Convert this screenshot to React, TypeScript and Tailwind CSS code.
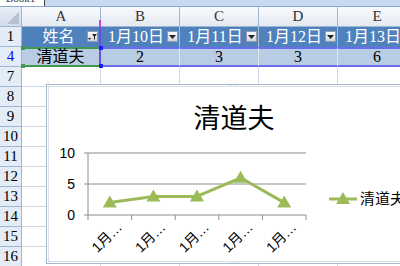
import React from 'react';

const serif = { fontFamily: '"Liberation Serif", "Noto Sans CJK SC", serif' };
const sans = '"Liberation Sans", "Noto Sans CJK SC", sans-serif';

const cols = ['A', 'B', 'C', 'D', 'E'];
const heads = ['1月10日', '1月11日', '1月12日', '1月13日'];
const values = [2, 3, 3, 6];
const emptyRows = [7, 8, 9, 10, 11, 12, 13, 14, 15, 16];

function DropButton() {
  return (
    <span className="absolute right-[1px] top-[4px] flex h-[11px] w-[11px] items-center justify-center border border-[#8f9cb0] bg-gradient-to-b from-[#fafafa] to-[#cfd5de]">
      <svg width="7" height="4" viewBox="0 0 7 4">
        <path d="M0 0h7L3.5 4z" fill="#222" />
      </svg>
    </span>
  );
}

function FilterButton() {
  return (
    <span className="absolute right-[1px] top-[4px] flex h-[11px] w-[11px] items-center justify-center border border-[#8f9cb0] bg-gradient-to-b from-[#fafafa] to-[#cfd5de]">
      <svg width="9" height="8" viewBox="0 0 9 8">
        <path d="M4 1h5L7 3.5V7L6 6V3.5z" fill="#222" />
        <path d="M0 5h3L1.5 7z" fill="#222" />
      </svg>
    </span>
  );
}

function RowLabel({ n, blue }: { n: number; blue?: boolean }) {
  return (
    <div className={`flex h-[20px] w-[22px] shrink-0 items-center justify-center border-r border-b border-[#9eb6ce] bg-[#e4ecf7] text-[15px] ${blue ? 'text-[#0000ff]' : 'text-black'}`}>
      {n}
    </div>
  );
}

function Chart() {
  const gx = (i: number) => 40 + i * 43.6 + 21.8;
  const gy = (v: number) => 129 - v * 6.2;
  const data = [2, 3, 3, 6, 2];
  const pts = data.map((v, i) => `${gx(i)},${gy(v)}`).join(' ');
  const tri = (x: number, y: number) => `M${x} ${y - 7}L${x + 7} ${y + 5}H${x - 7}z`;
  return (
    <div className="absolute left-[46px] top-[84px] h-[180px] w-[370px] border border-[#a9bccf] bg-white p-[1px]">
      <div className="relative h-full w-full border border-[#d9e2ec]">
        <div className="w-[266px] pl-[104px] pt-[16px] text-center text-[27px] leading-[32px] text-black" style={{ fontFamily: sans }}>
          清道夫
        </div>
        <svg className="absolute left-[-2px] top-[-2px]" width="370" height="180" viewBox="-1 -1 370 180">
          {[67, 98, 129].map((y) => (
            <line key={y} x1="36" y1={y} x2="258" y2={y} stroke="#8c8c8c" strokeWidth="1" />
          ))}
          <line x1="40" y1="67" x2="40" y2="129" stroke="#8c8c8c" strokeWidth="1" />
          {[0, 1, 2, 3, 4, 5].map((i) => (
            <line key={i} x1={40 + i * 43.6} y1="129" x2={40 + i * 43.6} y2="134" stroke="#8c8c8c" strokeWidth="1" />
          ))}
          {[
            ['10', 67],
            ['5', 98],
            ['0', 129],
          ].map(([t, y]) => (
            <text key={t} x="27" y={Number(y) + 5} textAnchor="end" fontSize="14" fill="#000" style={{ fontFamily: sans }}>
              {t}
            </text>
          ))}
          <polyline points={pts} fill="none" stroke="#9bbb59" strokeWidth="3" strokeLinejoin="round" />
          {data.map((v, i) => (
            <path key={i} d={tri(gx(i), gy(v))} fill="#9bbb59" />
          ))}
          {data.map((_, i) => (
            <text
              key={i}
              x={gx(i) + 13}
              y={142}
              textAnchor="end"
              fontSize="14"
              fill="#000"
              transform={`rotate(-45 ${gx(i) + 13} 142)`}
              style={{ fontFamily: sans }}
            >
              1月…
            </text>
          ))}
          <line x1="281" y1="113" x2="309" y2="113" stroke="#9bbb59" strokeWidth="3" />
          <path d={tri(295, 113)} fill="#9bbb59" />
          <text x="312" y="118" fontSize="15" fill="#000" style={{ fontFamily: sans }}>
            清道夫
          </text>
        </svg>
      </div>
      {/* resize handles */}
      <span className="absolute left-[180px] top-[-2px] text-[6px] leading-none tracking-[1px] text-[#8a9aae]">····</span>
      <span className="absolute bottom-[-3px] left-[182px] text-[6px] leading-none tracking-[1px] text-[#8a9aae]">····</span>
      <span className="absolute left-[-2px] top-[-3px] text-[7px] leading-none text-[#8a9aae]">⁘</span>
      <span className="absolute bottom-[-3px] left-[-2px] text-[7px] leading-none text-[#8a9aae]">⁘</span>
    </div>
  );
}

export default function App() {
  return (
    <div className="relative h-[266px] w-[400px] overflow-hidden bg-white" style={serif}>
      <div className="flex h-[6px] overflow-hidden bg-[#c8d8ee]">
        <div className="h-[6px] w-[45px] overflow-hidden border-r border-[#4a4a4a] bg-white">
          <div className="-mt-[7px] pl-[6px] text-[11px] leading-[11px] text-[#333]">Book1</div>
        </div>
      </div>
      <div className="h-[1px] bg-[#8ea8d6]" />

      <div className="flex h-[20px]">
        <div className="flex h-[20px] w-[22px] shrink-0 items-end justify-end border-r border-b border-[#9eb6ce] bg-gradient-to-b from-[#e9eef6] to-[#d2dbe8] p-[2px]">
          <svg width="12" height="12" viewBox="0 0 12 12">
            <path d="M12 0V12H0z" fill="#b7c2d1" />
          </svg>
        </div>
        {cols.map((c) => (
          <div
            key={c}
            className="flex h-[20px] w-[79px] shrink-0 items-center justify-center border-r border-b border-[#9eb6ce] bg-gradient-to-b from-[#f9fafc] to-[#e3e9f2] text-[15px] text-[#333]"
          >
            {c}
          </div>
        ))}
      </div>

      <div className="flex h-[20px]">
        <RowLabel n={1} />
        <div className="relative flex h-[20px] w-[79px] shrink-0 items-center justify-center border-r-2 border-[#6b4fe0] bg-[#4f81bd] pr-[4px] text-[16px] text-white">
          姓名
          <FilterButton />
        </div>
        {heads.map((h) => (
          <div key={h} className="relative flex h-[20px] w-[79px] shrink-0 items-center justify-center border-r border-[#a3bddb] bg-[#4f81bd] pr-[8px] text-[16px] text-white">
            {h}
            <DropButton />
          </div>
        ))}
      </div>

      <div className="flex h-[20px]">
        <RowLabel n={4} blue />
        <div className="flex h-[20px] w-[79px] shrink-0 items-center justify-center border-y-2 border-r-2 border-y-[#3f9a4f] border-r-[#6b4fe0] bg-[#b8cce4] text-[16px] text-black">
          清道夫
        </div>
        {values.map((v, i) => (
          <div key={i} className="flex h-[20px] w-[79px] shrink-0 items-center justify-center border-y-2 border-r border-y-[#6b6bee] border-r-[#dce6f1] bg-[#b8cce4] text-[16px] text-black">
            {v}
          </div>
        ))}
      </div>

      {emptyRows.map((r) => (
        <div key={r} className="flex h-[20px]">
          <RowLabel n={r} />
          {cols.map((c) => (
            <div key={c} className="h-[20px] w-[79px] shrink-0 border-r border-b border-[#d0d7e5]" />
          ))}
        </div>
      ))}

      {/* selection markers over the grid */}
      <div className="absolute left-[99px] top-[20px] h-[7px] w-[2px] bg-[#d63fd6]" />
      <div className="absolute left-[21px] top-[46px] h-[4px] w-[4px] bg-[#3f9a4f]" />
      <div className="absolute left-[21px] top-[64px] h-[4px] w-[4px] bg-[#3f9a4f]" />
      <div className="absolute left-[99px] top-[46px] h-[4px] w-[4px] bg-[#1a1aff]" />
      <div className="absolute left-[99px] top-[64px] h-[4px] w-[4px] bg-[#1a1aff]" />

      <Chart />
    </div>
  );
}
